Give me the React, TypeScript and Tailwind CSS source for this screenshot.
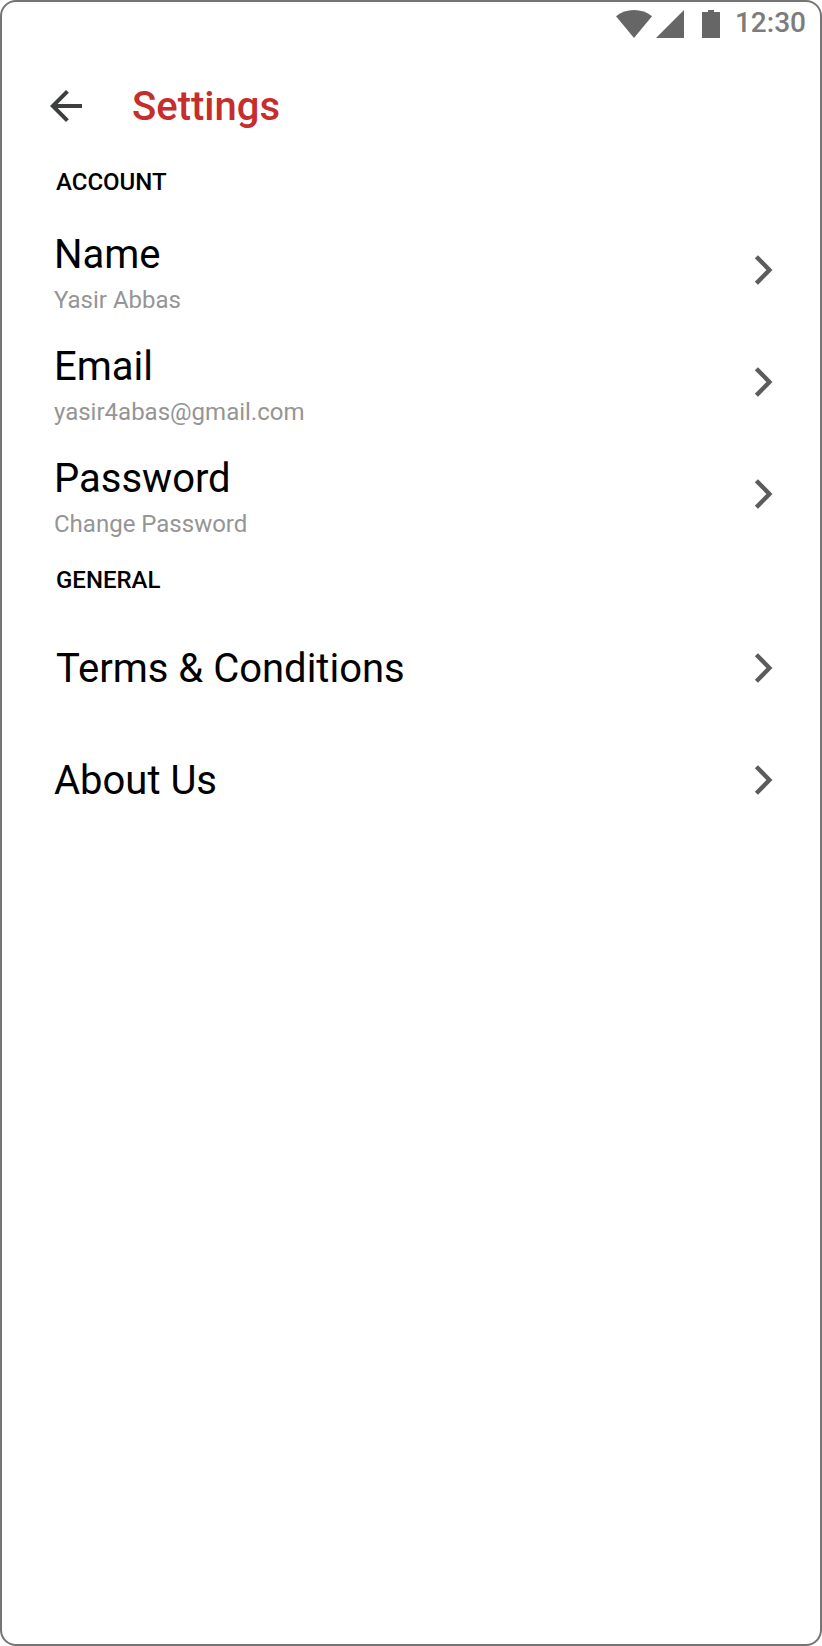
import React from "react";

function Chevron() {
  return (
    <svg className="h-12 w-12 shrink-0" viewBox="0 0 48 48" fill="none">
      <path d="M18.4 10.7L31.4 24L18.4 37.3" stroke="#5c5c5c" strokeWidth="4.4" />
    </svg>
  );
}

function StatusBar() {
  return (
    <div className="flex h-11 items-center justify-end pr-[14px]">
      <svg className="h-7 w-[104px] shrink-0" viewBox="0 0 104 28" fill="#666666">
        <path d="M0 6.2C5 2.1 11.300 0 18 0S31 2.100 36 6.200L18 28Z" />
        <path d="M40 28L68 0V28Z" />
        <path d="M86 2H92V0H98V2H104V28H86Z" />
      </svg>
      <span className="ml-[15px] pb-[2px] text-[28px] leading-[40px] font-medium text-[#7c7c7c]">12:30</span>
    </div>
  );
}

function SectionLabel({ children }: { children: React.ReactNode }) {
  return <h2 className="h-[62px] pl-[54px] text-2xl leading-[60px] font-medium text-black">{children}</h2>;
}

function DetailRow({ title, detail }: { title: string; detail: string }) {
  return (
    <li className="flex h-28 items-center justify-between pr-[34px] pl-[52px]">
      <div className="pt-2">
        <p className="text-[40px] leading-[52px] text-black">{title}</p>
        <p className="text-2xl leading-[38px] text-[#959595]">{detail}</p>
      </div>
      <Chevron />
    </li>
  );
}

export default function App() {
  return (
    <main className="h-[1646px] w-[822px] overflow-hidden rounded-[16px] border-2 border-[#757575] bg-white font-['Roboto',sans-serif]">
      <StatusBar />
      <header className="flex h-[106px] items-center pt-[14px] pl-10">
        <svg className="h-12 w-12 shrink-0" viewBox="0 0 24 24" fill="#3c3f3e">
          <path d="M20 11H7.830l5.590-5.590L12 4l-8 8 8 8 1.410-1.410L7.830 13H20v-2z" />
        </svg>
        <h1 className="ml-[42px] pt-[2px] text-[40px] leading-[48px] font-medium text-[#c62d2d]">Settings</h1>
      </header>
      <SectionLabel>ACCOUNT</SectionLabel>
      <ul>
        <DetailRow title="Name" detail="Yasir Abbas" />
        <DetailRow title="Email" detail="yasir4abas@gmail.com" />
        <DetailRow title="Password" detail="Change Password" />
      </ul>
      <SectionLabel>GENERAL</SectionLabel>
      <ul className="text-[40px] leading-[48px] text-black">
        <li className="flex h-28 items-center justify-between pr-[34px] pl-[54px]">
          <span className="pt-[2px]">Terms &amp; Conditions</span>
          <Chevron />
        </li>
        <li className="flex h-28 items-center justify-between pr-[34px] pl-[52px]">
          <span className="pt-[2px]">About Us</span>
          <Chevron />
        </li>
      </ul>
    </main>
  );
}
